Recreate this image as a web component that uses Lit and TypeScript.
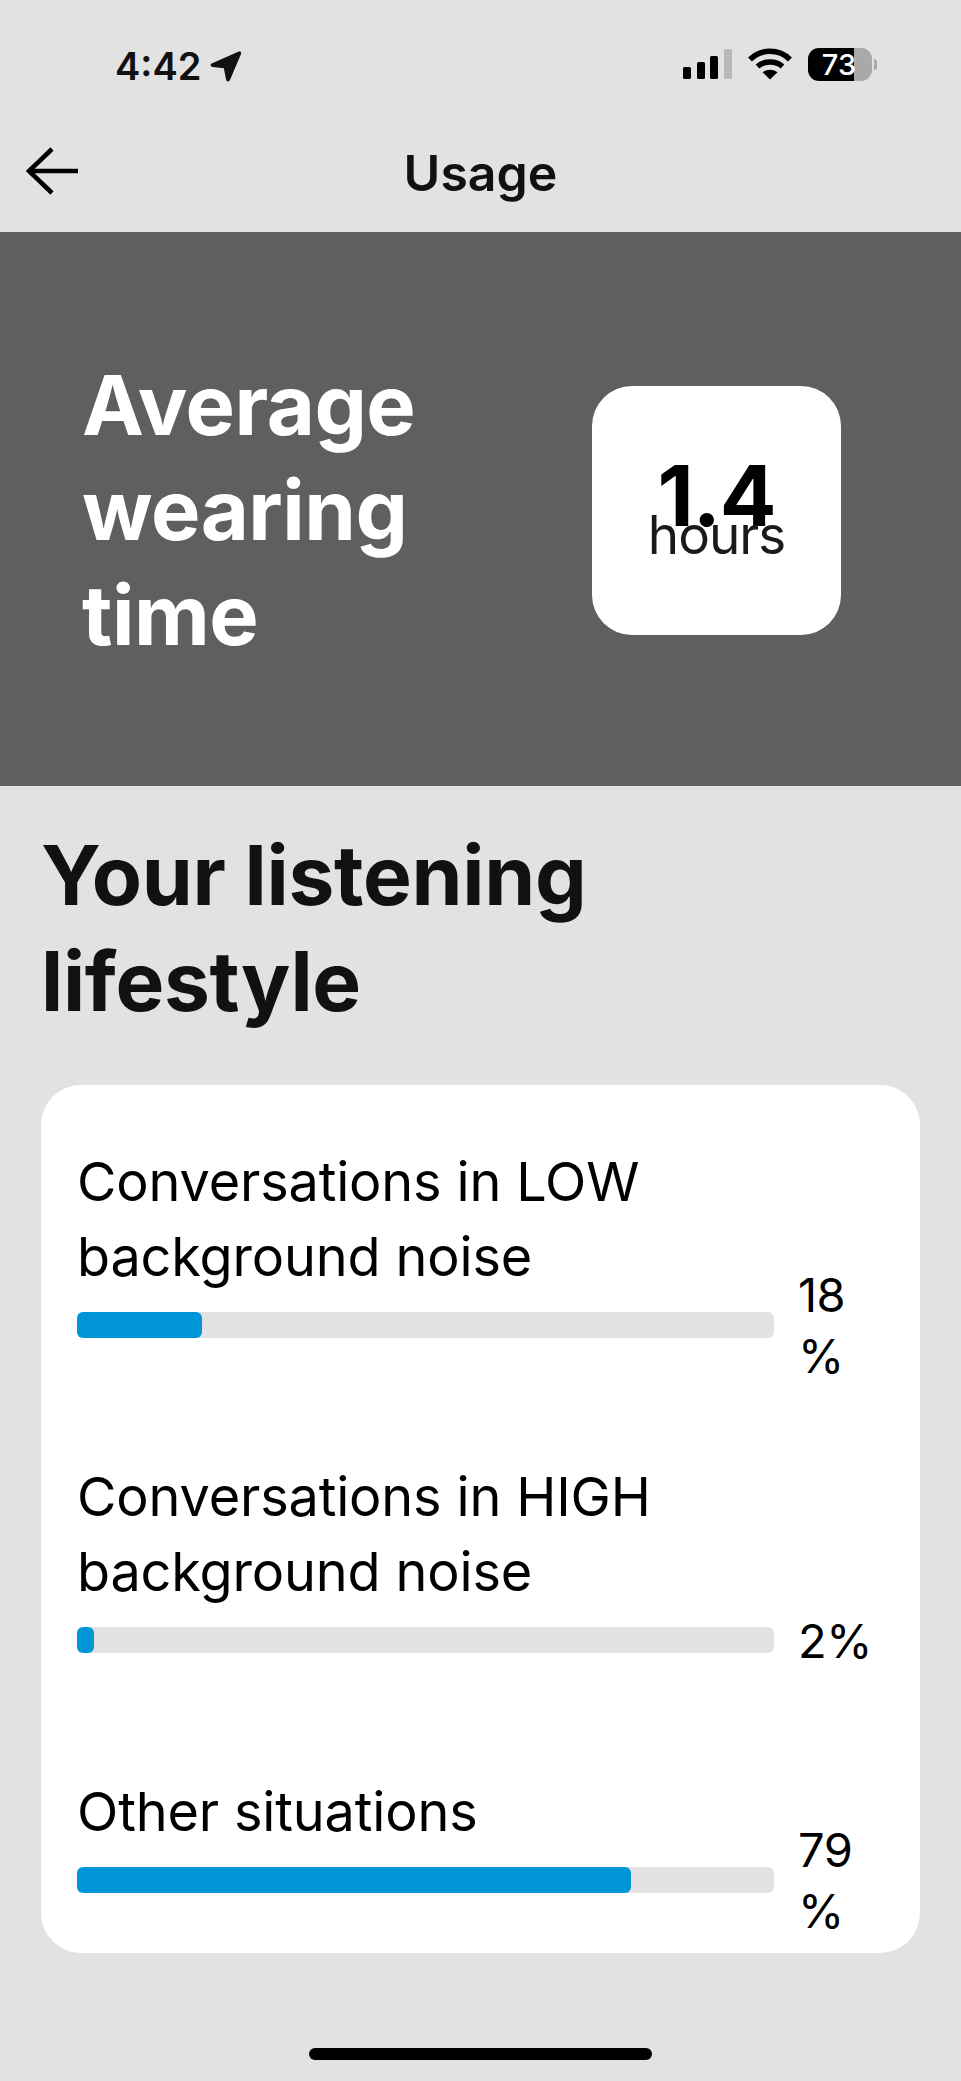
import { LitElement, html, css } from "lit";
import { customElement } from "lit/decorators.js";

const rows = [
  { label: "Conversations in LOW background noise", value: 18, fill: 125 },
  { label: "Conversations in HIGH background noise", value: 2, fill: 17 },
  { label: "Other situations", value: 79, fill: 554 },
];

@customElement("app-root")
export class AppRoot extends LitElement {
  static styles = css`
    :host {
      display: block;
      width: 961px;
      height: 2081px;
      background: #e2e2e2;
      font-family: Inter, "Liberation Sans", sans-serif;
      color: #000;
      overflow: hidden;
    }

    .status {
      height: 128px;
      box-sizing: border-box;
      padding: 47px 84px 0 115px;
      display: flex;
      justify-content: space-between;
      align-items: flex-start;
    }

    .time {
      display: flex;
      align-items: center;
      gap: 9px;
      font-size: 38px;
      line-height: 38px;
      font-weight: 600;
      color: #111;
    }

    .status-icons {
      display: flex;
      align-items: flex-start;
      gap: 16px;
      margin-top: 1px;
    }

    .signal {
      display: flex;
      align-items: flex-end;
      gap: 5.67px;
      height: 30px;
      margin-top: 1px;
    }

    .signal i {
      display: block;
      width: 8px;
      border-radius: 1.5px;
      background: #000;
    }

    .signal i.off {
      background: #b9b9b9;
    }

    .battery {
      display: flex;
      align-items: center;
      gap: 2px;
    }

    .battery-body {
      width: 64px;
      height: 33px;
      box-sizing: border-box;
      padding-right: 2px;
      border-radius: 11px;
      overflow: hidden;
      background: linear-gradient(to right, #000 46px, #a9a9a9 46px);
      color: #fff;
      font-size: 29px;
      line-height: 33px;
      font-weight: 500;
      text-align: center;
    }

    .nub {
      width: 3px;
      height: 11px;
      border-radius: 0 6px 6px 0;
      background: #a9a9a9;
    }

    .nav {
      height: 104px;
      box-sizing: border-box;
      padding-bottom: 15px;
      position: relative;
      display: flex;
      align-items: center;
      justify-content: center;
      font-size: 50px;
      font-weight: 600;
      color: #111;
    }

    .back {
      position: absolute;
      left: 25px;
      top: 18px;
    }

    .band {
      height: 554px;
      background: #5f5f61;
      box-sizing: border-box;
      padding: 2px 120px 0 82px;
      display: flex;
      align-items: center;
      justify-content: space-between;
    }

    .band h1 {
      margin: 0;
      width: 400px;
      font-size: 83px;
      line-height: 105px;
      font-weight: 700;
      color: #fff;
      letter-spacing: -0.5px;
    }

    .tile {
      width: 249px;
      height: 249px;
      box-sizing: border-box;
      padding-bottom: 2px;
      border-radius: 40px;
      background: #fff;
      display: flex;
      flex-direction: column;
      align-items: center;
      justify-content: center;
    }

    .tile b {
      font-size: 84px;
      line-height: 66px;
      font-weight: 700;
      letter-spacing: -1px;
    }

    .tile span {
      font-size: 53px;
      line-height: 40px;
      margin-top: -14px;
      font-weight: 400;
      color: #1a1a1a;
      letter-spacing: -1px;
    }

    h2 {
      margin: 0;
      width: 640px;
      padding: 37px 0 0 41px;
      font-size: 82px;
      line-height: 106px;
      font-weight: 700;
      color: #111;
      letter-spacing: -0.3px;
    }

    .card {
      margin: 50px 41px 0;
      height: 868px;
      box-sizing: border-box;
      padding: 59px 42px 0 36px;
      background: #fff;
      border-radius: 40px;
      display: flex;
      flex-direction: column;
      gap: 121px;
    }

    .label {
      width: 640px;
      font-size: 54px;
      line-height: 75px;
      letter-spacing: -0.15px;
      margin-bottom: 18px;
    }

    .bar-row {
      height: 26px;
      display: flex;
      align-items: center;
      gap: 24px;
    }

    .track {
      width: 697px;
      height: 26px;
      flex: none;
      border-radius: 6px;
      background: #e2e2e2;
    }

    .fill {
      height: 100%;
      border-radius: 6px;
      background: #0095d6;
    }

    .pct {
      width: 80px;
      flex: none;
      font-size: 47px;
      line-height: 61px;
      letter-spacing: -0.5px;
    }

    .home {
      width: 343px;
      height: 12px;
      border-radius: 6px;
      background: #000;
      margin: 95px auto 0;
    }
  `;

  render() {
    return html`
      <div class="status">
        <div class="time">
          4:42
          <svg width="32" height="32" viewBox="0 0 30 30">
            <path d="M1 13 L27 1.500 Q30 1 29 4 L18.500 28.500 Q16 31 15 27.500 L13 17 L2.500 16 Q-0.500 15 1 13 Z" fill="#111" />
          </svg>
        </div>
        <div class="status-icons">
          <div class="signal">
            <i style="height:12px"></i>
            <i style="height:17px"></i>
            <i style="height:23px"></i>
            <i class="off" style="height:30px"></i>
          </div>
          <svg width="44" height="32" viewBox="0 0 44 32" fill="none" stroke="#000" stroke-width="5.500">
            <path d="M2 11.500 C13 0.500 31 0.500 42 11.500" />
            <path d="M9.500 18.500 C16 12.500 28 12.500 34.500 18.500" />
            <path d="M22 31.500 L14.500 24.200 C18.500 20.800 25.500 20.800 29.500 24.200 Z" fill="#000" stroke="none" />
          </svg>
          <div class="battery">
            <div class="battery-body">73</div>
            <div class="nub"></div>
          </div>
        </div>
      </div>
      <div class="nav">
        <svg class="back" width="54" height="50" viewBox="0 0 54 50" fill="none" stroke="#000" stroke-width="4.500">
          <path d="M53 25 H4" />
          <path d="M27 3 L4 25 L27 47" />
        </svg>
        Usage
      </div>
      <div class="band">
        <h1>Average wearing time</h1>
        <div class="tile">
          <b>1.4</b>
          <span>hours</span>
        </div>
      </div>
      <h2>Your listening lifestyle</h2>
      <div class="card">
        ${rows.map(
          (r) => html`
            <div>
              <div class="label">${r.label}</div>
              <div class="bar-row">
                <div class="track">
                  <div class="fill" style="width:${r.fill}px"></div>
                </div>
                <div class="pct">${r.value}<wbr />%</div>
              </div>
            </div>
          `
        )}
      </div>
      <div class="home"></div>
    `;
  }
}
